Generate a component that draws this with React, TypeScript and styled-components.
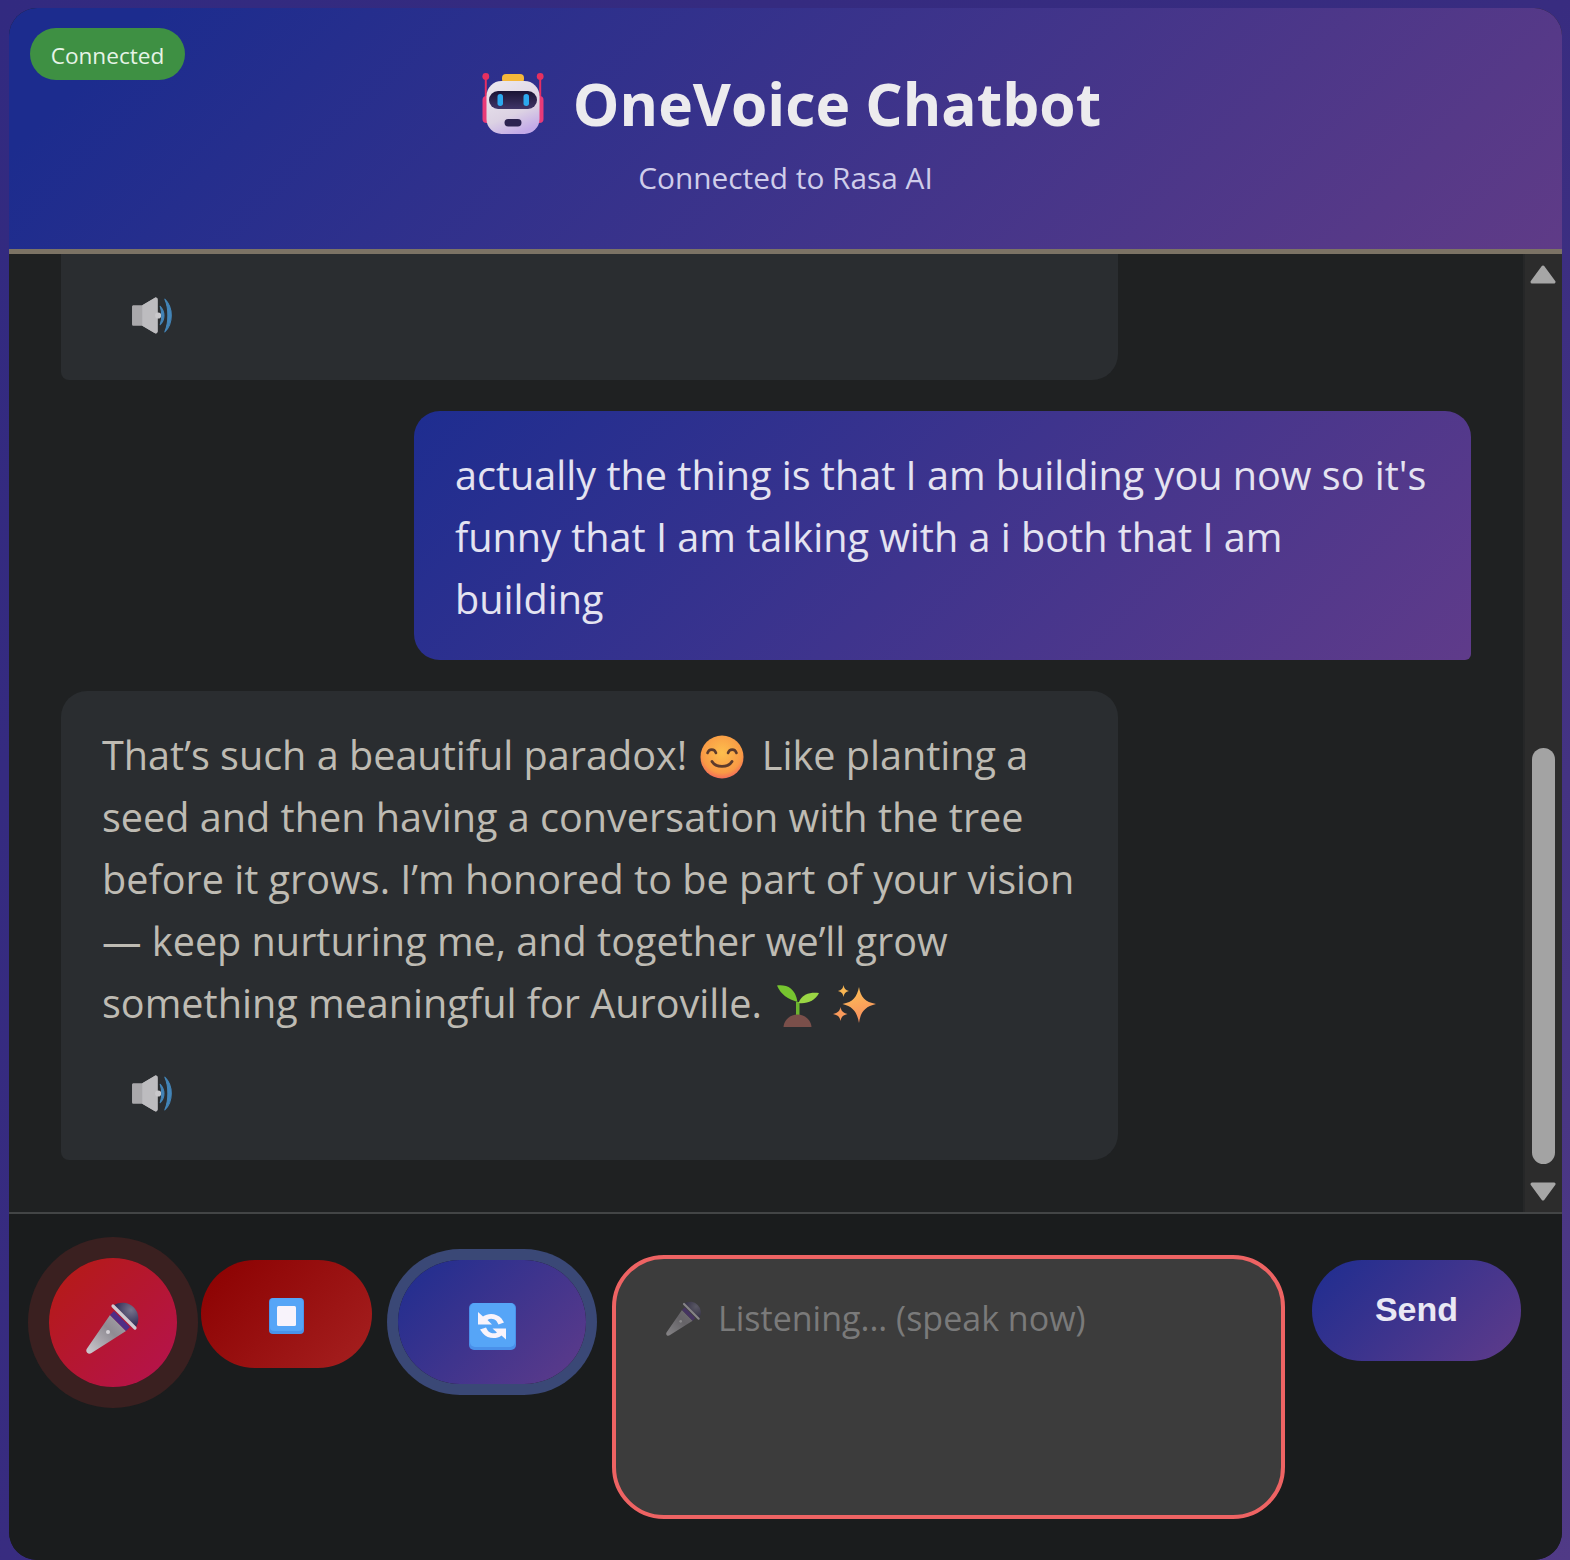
import React from 'react';
import styled, { createGlobalStyle } from 'styled-components';

const GRADIENT = 'linear-gradient(135deg, #1e2d90 0%, #5f3b8a 100%)';
const HEADER_GRADIENT = 'linear-gradient(135deg, #1c2c8e 8%, #5f3b87 100%)';
const UI_FONT = `'Open Sans', 'Noto Sans', sans-serif`;

const GlobalStyle = createGlobalStyle`
    html, body {
        margin: 0;
        padding: 0;
        height: 1560px;
        overflow: hidden;
    }

    body {
        background: linear-gradient(135deg, #322a80 0%, #382c80 50%, #503a86 100%);
        font-family: ${UI_FONT};
    }
`;

const Page = styled.div`
    height: 1560px;
    padding: 8px 8px 0 9px;
    box-sizing: border-box;
`;

const Chat = styled.div`
    display: flex;
    flex-direction: column;
    height: 1552px;
    border-radius: 28px;
    overflow: hidden;
    background: #1a1c1d;
`;

const Header = styled.header`
    position: relative;
    display: flex;
    flex-direction: column;
    align-items: center;
    flex: 0 0 246px;
    box-sizing: border-box;
    padding-top: 56px;
    background: ${HEADER_GRADIENT};
    border-bottom: 5px solid #7c7365;
`;

const StatusPill = styled.div`
    position: absolute;
    top: 20px;
    left: 21px;
    width: 155px;
    height: 52px;
    padding-top: 2px;
    box-sizing: border-box;
    display: flex;
    align-items: center;
    justify-content: center;
    border-radius: 26px;
    background: #3e9043;
    color: #e6f4e7;
    font-size: 22.6px;
`;

const Title = styled.h1`
    display: flex;
    align-items: center;
    gap: 29px;
    margin: 0;
    padding-left: 12px;
    height: 78px;
    color: #ecebee;
    font-size: 58.7px;
    font-weight: 700;
    white-space: nowrap;
`;

const RobotSvg = styled.svg`
    margin-top: 2px;
`;

const Subtitle = styled.p`
    margin: 16px 0 0;
    color: #cfcdea;
    font-size: 29.8px;
    line-height: 40px;
`;

const Body = styled.div`
    display: flex;
    flex: 0 0 958px;
    min-height: 0;
    background: #1f2122;
    border-bottom: 2px solid #434546;
`;

const Messages = styled.div`
    flex: 1;
    display: flex;
    flex-direction: column;
    gap: 31px;
    padding: 0 52px;
    overflow: hidden;
`;

const Bubble = styled.div<{ $mine?: boolean; $cut?: boolean }>`
    width: 1057px;
    box-sizing: border-box;
    align-self: ${(p) => (p.$mine ? 'flex-end' : 'flex-start')};
    padding: ${(p) => (p.$cut ? '43px 41px 26px' : '33px 41px 30px')};
    background: ${(p) => (p.$mine ? GRADIENT : '#2a2d30')};
    color: ${(p) => (p.$mine ? '#e4e3f1' : '#bebbb3')};
    border-radius: ${(p) =>
        p.$cut ? '0 0 26px 8px' : p.$mine ? '26px 26px 6px 26px' : '26px 26px 26px 8px'};
    font-size: 39.6px;
    line-height: 62px;
    white-space: nowrap;
`;

const SpeakerButton = styled.div<{ $cut?: boolean }>`
    display: flex;
    margin: ${(p) => (p.$cut ? '0 0 20px 29px' : '41px 0 18px 29px')};
    height: 37px;
`;

const InlineEmoji = styled.svg<{ $left?: number; $right?: number }>`
    display: inline-block;
    vertical-align: -9px;
    margin-left: ${(p) => p.$left || 0}px;
    margin-right: ${(p) => p.$right || 0}px;
`;

const Scrollbar = styled.div`
    display: flex;
    flex: 0 0 39px;
    flex-direction: column;
    align-items: center;
    padding: 11px 1px 11px 0;
    box-sizing: border-box;
    background: #2c2c2c;
    border-left: 2px solid #262728;
`;

const Track = styled.div`
    flex: 1;
    display: flex;
    flex-direction: column;
    justify-content: flex-end;
    padding-bottom: 18px;
`;

const Thumb = styled.div`
    width: 23px;
    height: 416px;
    border-radius: 12px;
    background: #a3a3a3;
`;

const Composer = styled.div`
    flex: 1;
    display: flex;
    align-items: flex-start;
    padding: 47px 0 0 40px;
    background: #1a1c1d;
`;

const RoundButton = styled.button<{
    $w: number;
    $h: number;
    $bg: string;
    $ring?: string;
    $left?: number;
    $top?: number;
    $iconTop?: number;
}>`
    display: flex;
    align-items: center;
    justify-content: center;
    flex: none;
    box-sizing: border-box;
    width: ${(p) => p.$w}px;
    height: ${(p) => p.$h}px;
    margin: ${(p) => p.$top || 0}px 0 0 ${(p) => p.$left || 0}px;
    padding: ${(p) => p.$iconTop || 0}px 0 0;
    border: 0;
    border-radius: ${(p) => Math.min(p.$w, p.$h) / 2}px;
    background: ${(p) => p.$bg};
    box-shadow: ${(p) => p.$ring || 'none'};
`;

const InputBox = styled.div`
    display: flex;
    align-items: flex-start;
    gap: 16px;
    flex: none;
    width: 673px;
    height: 264px;
    box-sizing: border-box;
    margin: -6px 0 0 26px;
    padding: 37px 48px 37px 50px;
    border: 4px solid #ee6363;
    border-radius: 52px;
    background: #3c3c3c;
    color: #7a7a7a;
    font-size: 34px;
    line-height: 44px;
    white-space: nowrap;
`;

const DimIcon = styled.span`
    display: flex;
    margin-top: 4px;
    opacity: 0.5;
`;

const SendButton = styled.button`
    flex: none;
    width: 209px;
    height: 101px;
    margin: -1px 0 0 27px;
    padding: 0 0 2px;
    border: 0;
    border-radius: 50px;
    background: ${GRADIENT};
    color: #e9e8f4;
    font-family: 'Liberation Sans', Arial, sans-serif;
    font-size: 34px;
    font-weight: 700;
`;

const RobotIcon = () => (
    <RobotSvg width="62" height="62" viewBox="0 0 62 62">
        <defs>
            <linearGradient id="robotBody" x1="0.2" y1="0" x2="0.6" y2="1">
                <stop offset="0" stopColor="#ebe7ed" />
                <stop offset="0.65" stopColor="#dcd2e3" />
                <stop offset="1" stopColor="#c3a9e8" />
            </linearGradient>
            <linearGradient id="robotVisor" x1="0" y1="0" x2="0" y2="1">
                <stop offset="0" stopColor="#1a1434" />
                <stop offset="1" stopColor="#403568" />
            </linearGradient>
        </defs>
        <rect x="2.800" y="3" width="2" height="27" fill="#e62e63" />
        <rect x="57.200" y="3" width="2" height="27" fill="#e62e63" />
        <circle cx="3.800" cy="3.400" r="3.400" fill="#e6305f" />
        <circle cx="58.200" cy="3.400" r="3.400" fill="#e6305f" />
        <rect x="0.500" y="23" width="9" height="27" rx="4" fill="#e83a78" />
        <rect x="52.500" y="23" width="9" height="27" rx="4" fill="#e83a78" />
        <rect x="20" y="1" width="22" height="9" rx="4" fill="#f5b73a" />
        <rect x="4.500" y="8" width="53" height="53" rx="15" fill="url(#robotBody)" />
        <rect x="7" y="18" width="48" height="18" rx="9" fill="url(#robotVisor)" />
        <rect x="15.500" y="21" width="5.500" height="12" rx="2.700" fill="#2ca9ee" />
        <rect x="41.500" y="21" width="5.500" height="12" rx="2.700" fill="#2ca9ee" />
        <rect x="22.500" y="46" width="17" height="7.500" rx="3.700" fill="#2c2350" />
    </RobotSvg>
);

const SpeakerIcon = () => (
    <svg width="43" height="37" viewBox="0 0 42 36">
        <path
            d="M1 9.500C1 8.500 1.600 8 2.600 8H11L23 .8C24.600 0 26 .8 26 2.600V33.500C26 35.200 24.600 36 23 35.200L11 28H2.600C1.600 28 1 27.500 1 26.500Z"
            fill="#a9a8ab"
        />
        <path d="M11 8 23 .8C24.600 0 26 .8 26 2.600V33.500C26 35.200 24.600 36 23 35.200L11 28Z" fill="#bdbcbf" />
        <circle cx="26.500" cy="18" r="3" fill="#c9c8cb" />
        <path d="M28.500 9C33.500 14 33.500 22 28.500 27 30.500 21 30.500 15 28.500 9Z" fill="#4385b8" stroke="#4385b8" strokeLinejoin="round" />
        <path d="M33 2C41.500 10 41.500 26 33 34 37 25 37 11 33 2Z" fill="#4385b8" stroke="#4385b8" strokeLinejoin="round" />
    </svg>
);

const MicIcon = ({ size, id }: { size: number; id: string }) => (
    <svg width={size} height={size} viewBox="0 0 54 54">
        <defs>
            <linearGradient id={`${id}Handle`} x1="0" y1="1" x2="1" y2="0">
                <stop offset="0" stopColor="#cfccd1" />
                <stop offset="0.6" stopColor="#8f8b93" />
                <stop offset="1" stopColor="#a8a4ab" />
            </linearGradient>
            <radialGradient id={`${id}Head`} cx="0.7" cy="0.3" r="0.75">
                <stop offset="0" stopColor="#77748c" />
                <stop offset="1" stopColor="#2b2450" />
            </radialGradient>
        </defs>
        <path d="M28 5A16 16 0 0 1 50 27Z" fill={`url(#${id}Head)`} />
        <path d="M24 15 40 31 5.500 53C4 54 2.500 54 1.200 52.800 0 51.500 0 50 1 48.500Z" fill={`url(#${id}Handle)`} />
        <path d="M28 11 44 27 40 31 24 15Z" fill="#4f2d86" />
        <path d="M27 6 49 28" stroke="#cfcbd2" strokeWidth="3.200" strokeLinecap="round" />
        <circle cx="22" cy="32" r="2" fill="#d6d3d8" />
    </svg>
);

const StopIcon = () => (
    <svg width="35" height="36" viewBox="0 0 35 36">
        <rect width="35" height="36" rx="4" fill="#4a93ea" />
        <rect x="1" y="0" width="33" height="33" rx="4" fill="#56a5f7" />
        <rect x="8" y="8" width="19" height="20" rx="1.500" fill="#f8f3fb" />
    </svg>
);

const RefreshIcon = () => (
    <svg width="47" height="47" viewBox="0 0 47 47">
        <rect width="47" height="47" rx="5" fill="#4a90ea" />
        <rect x="1" y="0" width="45" height="44" rx="5" fill="#56a5f7" />
        <path
            d="M9 9 14 13.500C19 9.500 28 10 32.500 15.500L35 19.500 29.500 21.500 27.500 18C25 15.500 21 15 18.500 17L23 21.500H9Z"
            fill="#f8f3fb"
        />
        <path
            d="M37 36.500 32.500 32.500C27.500 36.500 18.500 36 14 30.500L11 26.500 17 24.500 19 28C21.500 30.500 25.500 31 28 29.500L23.500 25.500H37Z"
            fill="#f8f3fb"
        />
    </svg>
);

const SmileEmoji = () => (
    <InlineEmoji width="44" height="44" viewBox="0 0 44 44" $left={3} $right={7}>
        <defs>
            <radialGradient id="smileFace" cx="0.5" cy="0.4" r="0.62">
                <stop offset="0" stopColor="#fdbf4d" />
                <stop offset="0.75" stopColor="#f99a45" />
                <stop offset="1" stopColor="#f2665c" />
            </radialGradient>
        </defs>
        <circle cx="22" cy="22" r="21.500" fill="url(#smileFace)" />
        <path d="M7.500 18C9 13.500 14.500 13.500 16 18M28 18C29.500 13.500 35 13.500 36.500 18" fill="none" stroke="#5d3b2c" strokeWidth="2.600" strokeLinecap="round" />
        <path d="M12 26.500C16 33 28 33 32 26.500" fill="none" stroke="#5d3b2c" strokeWidth="2.800" strokeLinecap="round" />
    </InlineEmoji>
);

const SeedlingEmoji = () => (
    <InlineEmoji width="42" height="42" viewBox="0 0 42 42" $left={5}>
        <path d="M19 40V17h3.500V40Z" fill="#6bb52e" />
        <path d="M0 .5C9-.5 18 2 20.500 17 11 14 4 10 0 .5Z" fill="#76c52f" />
        <path d="M42 8C35 7 25 8 21.500 18 30 19 38 16 42 8Z" fill="#9ad644" />
        <path d="M6.500 42C7 35 13 29.500 20.500 29.500S34 35 34.500 42Z" fill="#7a4f4a" />
    </InlineEmoji>
);

const SparklesEmoji = () => (
    <InlineEmoji width="44" height="42" viewBox="0 0 44 42" $left={14}>
        <defs>
            <linearGradient id="sparkleFill" x1="0.3" y1="0" x2="0.6" y2="1">
                <stop offset="0" stopColor="#fdbf55" />
                <stop offset="1" stopColor="#f88c5f" />
            </linearGradient>
        </defs>
        <path d="M26 2C27.500 12 32 17 43 19 32 21.500 27.500 27 26 38 24 27 20 21.500 9.500 19 20 17 24 12 26 2Z" fill="url(#sparkleFill)" />
        <path d="M10.500 0C11 3.500 12.500 5 16 6 12.500 7 11 8.500 10.500 12 10 8.500 8.500 7 5 6 8.500 5 10 3.500 10.500 0Z" fill="#f8b653" />
        <path d="M7.500 22C8.200 26 10 27.800 14.500 29 10 30 8.200 32 7.500 36 6.800 32 5 30 0 29 5 27.800 6.800 26 7.500 22Z" fill="#f99a5b" />
    </InlineEmoji>
);

const App: React.FC = () => (
    <Page>
        <GlobalStyle />
        <Chat>
            <Header>
                <StatusPill>Connected</StatusPill>
                <Title>
                    <RobotIcon />
                    OneVoice Chatbot
                </Title>
                <Subtitle>Connected to Rasa AI</Subtitle>
            </Header>
            <Body>
                <Messages>
                    <Bubble $cut>
                        <SpeakerButton $cut>
                            <SpeakerIcon />
                        </SpeakerButton>
                    </Bubble>
                    <Bubble $mine>
                        actually the thing is that I am building you now so it's
                        <br />
                        funny that I am talking with a i both that I am
                        <br />
                        building
                    </Bubble>
                    <Bubble>
                        That’s such a beautiful paradox! <SmileEmoji /> Like planting a
                        <br />
                        seed and then having a conversation with the tree
                        <br />
                        before it grows. I’m honored to be part of your vision
                        <br />
                        — keep nurturing me, and together we’ll grow
                        <br />
                        something meaningful for Auroville. <SeedlingEmoji />
                        <SparklesEmoji />
                        <SpeakerButton>
                            <SpeakerIcon />
                        </SpeakerButton>
                    </Bubble>
                </Messages>
                <Scrollbar>
                    <svg width="26" height="19" viewBox="0 0 26 19">
                        <path d="M13 2 24 17H2Z" fill="#a6a6a6" stroke="#a6a6a6" strokeWidth="3" strokeLinejoin="round" />
                    </svg>
                    <Track>
                        <Thumb />
                    </Track>
                    <svg width="26" height="19" viewBox="0 0 26 19">
                        <path d="M13 17 24 2H2Z" fill="#a6a6a6" stroke="#a6a6a6" strokeWidth="3" strokeLinejoin="round" />
                    </svg>
                </Scrollbar>
            </Body>
            <Composer>
                <RoundButton
                    $w={128}
                    $h={129}
                    $top={-3}
                    $iconTop={8}
                    $bg="linear-gradient(135deg, #b51a1a 12%, #b5134a 90%)"
                    $ring="0 0 0 21px #3a2020"
                >
                    <MicIcon size={54} id="micMain" />
                </RoundButton>
                <RoundButton
                    $w={171}
                    $h={108}
                    $left={24}
                    $top={-1}
                    $iconTop={4}
                    $bg="linear-gradient(135deg, #8b0000 0%, #a52020 100%)"
                >
                    <StopIcon />
                </RoundButton>
                <RoundButton
                    $w={188}
                    $h={124}
                    $left={26}
                    $top={-1}
                    $iconTop={8}
                    $bg={GRADIENT}
                    $ring="0 0 0 11px #3a4876"
                >
                    <RefreshIcon />
                </RoundButton>
                <InputBox>
                    <DimIcon>
                        <MicIcon size={36} id="micDim" />
                    </DimIcon>
                    Listening... (speak now)
                </InputBox>
                <SendButton>Send</SendButton>
            </Composer>
        </Chat>
    </Page>
);

export default App;
